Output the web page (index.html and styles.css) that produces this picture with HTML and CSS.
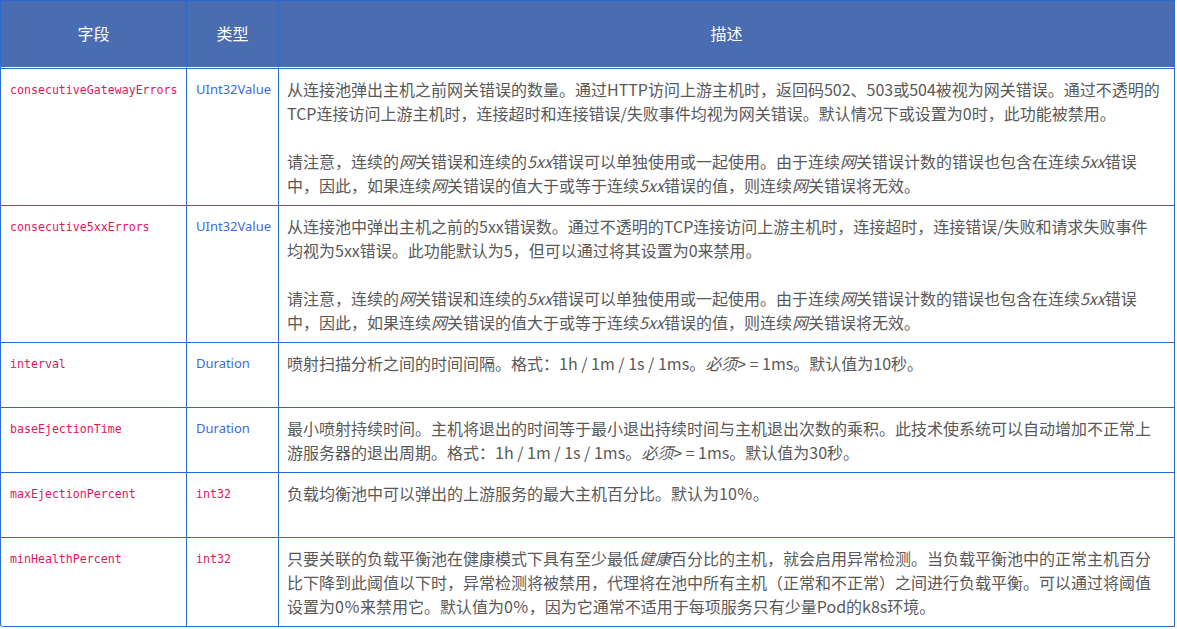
FILE: index.html
```html
<!DOCTYPE html>
<html lang="zh-CN">
<head>
<meta charset="utf-8">
<title>OutlierDetection</title>
<link rel="stylesheet" href="styles.css">
</head>
<body>
<table class="fields">
  <colgroup>
    <col class="c-field">
    <col class="c-type">
    <col class="c-desc">
  </colgroup>
  <thead>
    <tr>
      <th>字段</th>
      <th>类型</th>
      <th>描述</th>
    </tr>
  </thead>
  <tbody>
    <tr class="first">
      <td class="small"><code>consecutiveGatewayErrors</code></td>
      <td class="small"><span class="type">UInt32Value</span></td>
      <td class="desc">
        <p>从连接池弹出主机之前网关错误的数量。通过HTTP访问上游主机时，返回码502、503或504被视为网关错误。通过不透明的<br>TCP连接访问上游主机时，连接超时和连接错误/失败事件均视为网关错误。默认情况下或设置为0时，此功能被禁用。</p>
        <p>请注意，连续的<em>网</em>关错误和连续的<em>5xx</em>错误可以单独使用或一起使用。由于连续<em>网</em>关错误计数的错误也包含在连续<em>5xx</em>错误<br>中，因此，如果连续<em>网</em>关错误的值大于或等于连续<em>5xx</em>错误的值，则连续<em>网</em>关错误将无效。</p>
      </td>
    </tr>
    <tr>
      <td class="small"><code>consecutive5xxErrors</code></td>
      <td class="small"><span class="type">UInt32Value</span></td>
      <td class="desc">
        <p>从连接池中弹出主机之前的5xx错误数。通过不透明的TCP连接访问上游主机时，连接超时，连接错误/失败和请求失败事件<br>均视为5xx错误。此功能默认为5，但可以通过将其设置为0来禁用。</p>
        <p>请注意，连续的<em>网</em>关错误和连续的<em>5xx</em>错误可以单独使用或一起使用。由于连续<em>网</em>关错误计数的错误也包含在连续<em>5xx</em>错误<br>中，因此，如果连续<em>网</em>关错误的值大于或等于连续<em>5xx</em>错误的值，则连续<em>网</em>关错误将无效。</p>
      </td>
    </tr>
    <tr class="short">
      <td class="small"><code>interval</code></td>
      <td class="small"><span class="type">Duration</span></td>
      <td class="desc">
        <p>喷射扫描分析之间的时间间隔。格式：1h / 1m / 1s / 1ms。<em>必须</em>&gt; = 1ms。默认值为10秒。</p>
      </td>
    </tr>
    <tr class="short">
      <td class="small"><code>baseEjectionTime</code></td>
      <td class="small"><span class="type">Duration</span></td>
      <td class="desc">
        <p>最小喷射持续时间。主机将退出的时间等于最小退出持续时间与主机退出次数的乘积。此技术使系统可以自动增加不正常上<br>游服务器的退出周期。格式：1h / 1m / 1s / 1ms。<em>必须</em>&gt; = 1ms。默认值为30秒。</p>
      </td>
    </tr>
    <tr class="short">
      <td class="small"><code>maxEjectionPercent</code></td>
      <td class="small"><code>int32</code></td>
      <td class="desc">
        <p>负载均衡池中可以弹出的上游服务的最大主机百分比。默认为10％。</p>
      </td>
    </tr>
    <tr class="last">
      <td class="small"><code>minHealthPercent</code></td>
      <td class="small"><code>int32</code></td>
      <td class="desc">
        <p>只要关联的负载平衡池在健康模式下具有至少最低<em>健康</em>百分比的主机，就会启用异常检测。当负载平衡池中的正常主机百分<br>比下降到此阈值以下时，异常检测将被禁用，代理将在池中所有主机（正常和不正常）之间进行负载平衡。可以通过将阈值<br>设置为0％来禁用它。默认值为0％，因为它通常不适用于每项服务只有少量Pod的k8s环境。</p>
      </td>
    </tr>
  </tbody>
</table>
</body>
</html>
```

FILE: styles.css
```css
html, body {
  margin: 0;
  padding: 0;
  background: #ffffff;
}

body {
  font-family: "Noto Sans CJK SC", "Noto Sans", sans-serif;
  color: #595959;
}

.fields {
  border-collapse: separate;
  border-spacing: 0;
  table-layout: fixed;
  width: 1175px;
  border-left: 1px solid #2b6bcc;
  border-top: 1px solid #2b6bcc;
  border-bottom-left-radius: 3px;
}

.c-field { width: 186px; }
.c-type { width: 92px; }
.c-desc { width: 896px; }

.fields th {
  box-sizing: border-box;
  height: 67px;
  padding: 0 0 2px 0;
  background: #4a6cb0;
  color: #ffffff;
  font-size: 16px;
  font-weight: normal;
  text-align: center;
  vertical-align: middle;
  border-right: 1px solid #2b6bcc;
  border-bottom: 1px solid #ffffff;
}

.fields td {
  padding: 8px 9px 8px 9px;
  vertical-align: top;
  border-right: 1px solid #2b6bcc;
  border-bottom: 1px solid #2b6bcc;
  font-size: 16px;
  line-height: 24px;
}

.fields td.small {
  font-size: 12px;
  line-height: 23px;
}

.fields tr.first td {
  border-top: 1px solid #2b6bcc;
}

.fields tr.short td {
  height: 48px;
}

.fields tr.last td:first-child {
  border-bottom-left-radius: 3px;
}

.fields td.desc {
  padding-left: 8px;
  padding-right: 0;
}

.desc p {
  margin: 0 0 24px 0;
  white-space: nowrap;
}

.desc p:last-child {
  margin-bottom: 0;
}

.desc em {
  font-style: italic;
}

code {
  font-family: "DejaVu Sans Mono", "Liberation Mono", monospace;
  font-size: 11.6px;
  color: #e0165c;
}

.type {
  font-family: "Noto Sans", "Liberation Sans", sans-serif;
  font-size: 13px;
  color: #3d6bd3;
}
```
